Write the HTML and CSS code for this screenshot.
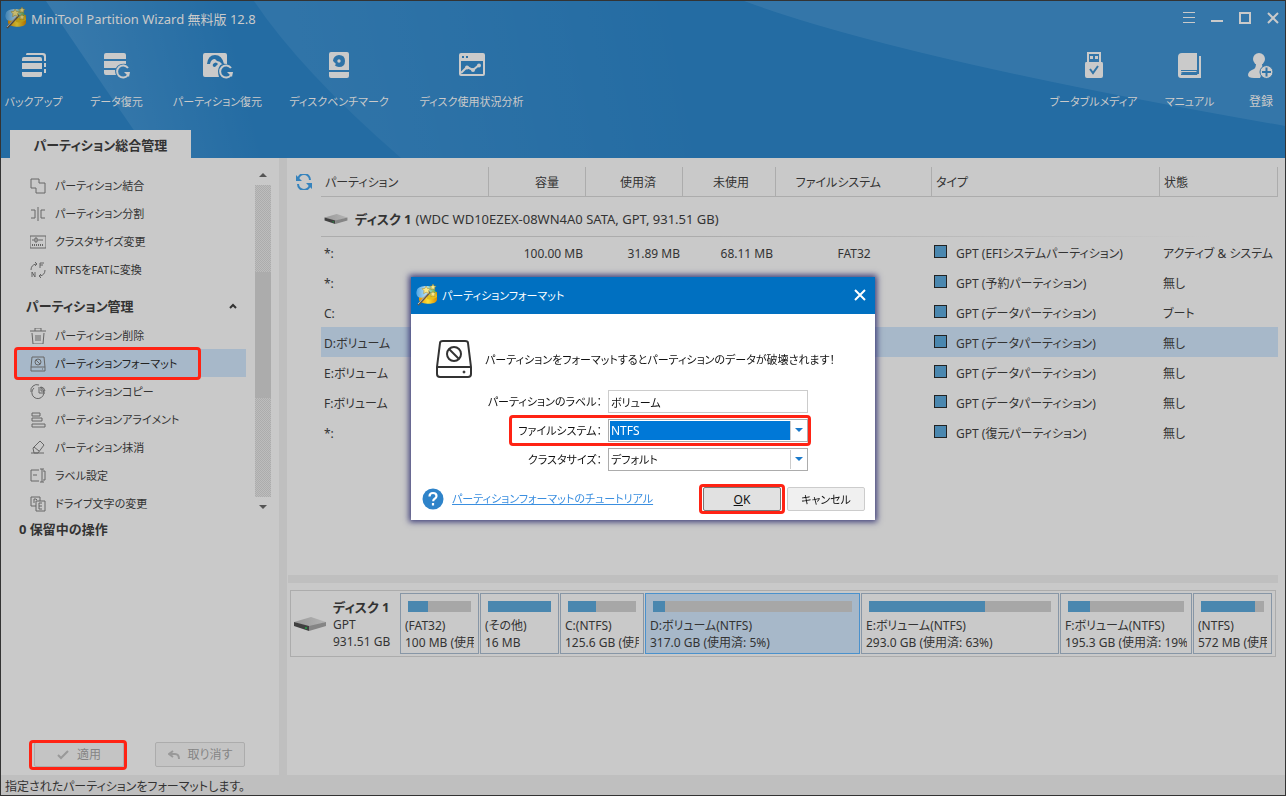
FILE: index.html
```html
<!DOCTYPE html>
<html lang="ja">
<head>
<meta charset="utf-8">
<title>MiniTool Partition Wizard 無料版 12.8</title>
<link rel="stylesheet" href="styles.css">
</head>
<body>
<svg class="defs" aria-hidden="true">
  <defs>
    <linearGradient id="gold" x1="0" x2="1"><stop offset="0" stop-color="#e88f00"/><stop offset=".5" stop-color="#ffe23a"/><stop offset="1" stop-color="#d88a00"/></linearGradient>
    <linearGradient id="sky" x1="0" x2="1"><stop offset="0" stop-color="#4fa6e4"/><stop offset=".5" stop-color="#b4def6"/><stop offset="1" stop-color="#62b544"/></linearGradient>
    <linearGradient id="diskTop" x1="0" x2="1"><stop offset="0" stop-color="#999"/><stop offset="1" stop-color="#b4b4b4"/></linearGradient>
    <symbol id="logo" viewBox="0 0 22 22">
      <path d="M3 11v5c1 4 16 6 18 0V8z" fill="url(#gold)"/>
      <path d="M1 6c1-4 11-5 15-3l4 5c-3 4-14 7-18 5-2-2-2-5-1-7z" fill="url(#sky)"/>
      <path d="M11 11c4 0 7-1 9-3l1 5c-3 2-7 3-10 2z" fill="#e6c21c"/>
      <path d="M2 21 14 8" stroke="#655b4b" stroke-width="2"/><path d="M2 20 13 8" stroke="#ddd" stroke-width=".8"/>
      <path d="m10 2 1.500 2.500 3 .2-2 2 .7 3-3-1.500-2.600 1.500.4-3-2-2 3-.4zM17 0l1 2 2 .3-1.500 1.500.4 2-2-1-2 1 .5-2L14 2.300l2-.3zM17 7l1 2 2 .3-1.500 1.500.4 2-2-1-2 1 .5-2L14 9.300l2-.3z" fill="#f8e98c" stroke="#a58726" stroke-width=".5"/>
    </symbol>
    <symbol id="disk" viewBox="0 0 32 14">
      <path d="M0 5 17 0l15 5-17 5z" fill="url(#diskTop)"/><path d="M0 5l15 4v5L0 9z" fill="#404040"/><path d="M15 9l17-4v4l-17 5z" fill="#858585"/><path d="M12 10v2" stroke="#20a545" stroke-width="1.500"/>
    </symbol>
  </defs>
</svg>
<div class="window">
  <header class="top">
    <svg class="beams" viewBox="0 0 1284 157" preserveAspectRatio="none" aria-hidden="true">
      <defs>
        <linearGradient id="b1" gradientUnits="userSpaceOnUse" x1="70" y1="60" x2="230" y2="20"><stop stop-color="#fff" stop-opacity=".09"/><stop offset="1" stop-color="#fff" stop-opacity="0"/></linearGradient>
        <linearGradient id="b2" gradientUnits="userSpaceOnUse" x1="300" y1="70" x2="680" y2="0"><stop stop-color="#fff" stop-opacity=".055"/><stop offset="1" stop-color="#fff" stop-opacity="0"/></linearGradient>
      </defs>
      <path d="M45 0Q92 70 152 157H450L240 0z" fill="url(#b1)"/>
      <path d="M253 0Q300 70 400 157H800V0z" fill="url(#b2)"/>
      <path d="M743 0Q900 58 1284 125V0z" fill="#fff" fill-opacity=".075"/>
    </svg>
    <div class="titlebar">
      <svg class="logo dim"><use href="#logo"/></svg>
      <h1>MiniTool Partition Wizard 無料版 12.8</h1>
      <div class="winbtns">
        <button aria-label="メニュー"><svg width="12" height="12" viewBox="0 0 12 12"><path d="M0 .5h12M0 5.500h12M0 10.500h12" stroke="currentColor"/></svg></button>
        <button aria-label="最小化"><svg width="12" height="12" viewBox="0 0 12 12"><path d="M0 9h12" stroke="currentColor" stroke-width="2"/></svg></button>
        <button aria-label="最大化"><svg width="12" height="12" viewBox="0 0 12 12"><path d="M1 1h10v10H1z" fill="none" stroke="currentColor" stroke-width="2"/></svg></button>
        <button aria-label="閉じる"><svg width="12" height="12" viewBox="0 0 12 12"><path d="m1 1 10 10M11 1 1 11" stroke="currentColor" stroke-width="2"/></svg></button>
      </div>
    </div>
    <nav class="toolbar">
      <button class="tool w-s"><svg viewBox="0 0 26 28"><path d="M6 1h16q3 0 3 3v5h-2V5q0-2-2-2H5q0-2 1-2zM23 11h2v4h-2zM23 17h2v4h-2zM3 5h16q2 0 2 2v2H1V7q0-2 2-2zM1 11h20v6H1zM1 20h20v3q0 2-2 2H3q-2 0-2-2z" fill="currentColor"/></svg>バックアップ</button>
      <button class="tool w-s"><svg viewBox="0 0 28 28"><path d="M3 1h18q2 0 2 2v4H1V3q0-2 2-2zM1 9h22v3q-7-1-10 4H1zM1 18h11q0 3 1 5H3q-2 0-2-2z" fill="currentColor"/><path d="M25 16a6 6 0 1 0 0 7" fill="none" stroke="currentColor" stroke-width="2"/><path d="M27 20h-6l5 5z" fill="currentColor"/></svg>データ復元</button>
      <button class="tool w-m"><svg viewBox="0 0 32 28"><path fill-rule="evenodd" d="M3 1h20q2 0 2 2v9q-8-2-9 7 0 3 1 6H3q-2 0-2-2V3q0-2 2-2zm2 11h3q1-5 5-5l2 2q3 0 5 3h2Q20 3 13 3T5 12zm6 0q3-3 5 0l-3 3q-3 0-2-3z" fill="currentColor"/><path d="M29 16a6 6 0 1 0 0 7" fill="none" stroke="currentColor" stroke-width="2"/><path d="M31 20h-6l5 5z" fill="currentColor"/></svg>パーティション復元</button>
      <button class="tool w-l"><svg viewBox="0 0 22 28"><path fill-rule="evenodd" d="M3 0h16q2 0 2 2v16H1V2q0-2 2-2zm8 3a6 6 0 1 0 0 12q6 0 6-6t-6-6zM1 20h20v4q0 2-2 2H3q-2 0-2-2z" fill="currentColor"/><circle cx="11" cy="9" r="1.700" fill="currentColor"/><path d="m8 12-3 3V9z" fill="currentColor"/></svg>ディスクベンチマーク</button>
      <button class="tool w-xl"><svg viewBox="0 0 28 28"><path fill-rule="evenodd" d="M3 1h22q2 0 2 2v19q0 2-2 2H3q-2 0-2-2V3q0-2 2-2zm1 3v2h2V4zm4 0v2h2V4zM3 9v13h22V9z" fill="currentColor"/><path d="m3 21 6-6 6 3 6-5" fill="none" stroke="currentColor" stroke-width="2"/><circle cx="9" cy="15.500" r="2" fill="currentColor"/><circle cx="15" cy="18" r="2" fill="currentColor"/><circle cx="21" cy="13.500" r="2" fill="currentColor"/></svg>ディスク使用状況分析</button>
      <span class="spacer"></span>
      <button class="tool w-b"><svg viewBox="0 0 20 28"><path fill-rule="evenodd" d="M3 0h14v10h1q1 0 1 2v12q0 2-2 2H3q-2 0-2-2V12q0-2 1-2h1zm2 2v8h10V2z" fill="currentColor"/><path d="M6 4h3v3H6zM11 4h3v3h-3z" fill="currentColor"/><path d="m6 17 3 4 5-7" fill="none" stroke="#3275a7" stroke-width="2"/></svg>ブータブルメディア</button>
      <button class="tool w-u"><svg viewBox="0 0 26 28"><path fill-rule="evenodd" d="M5 1h15v19H6q-2 0-2 1t2 1h16V4h2v22H4q-3 0-3-3V5q0-4 4-4z" fill="currentColor"/><path d="M4 18.500h16M4 22.500h16V18" fill="none" stroke="#3275a7"/></svg>マニュアル</button>
      <button class="tool w-r"><svg viewBox="0 0 26 28"><circle cx="11" cy="7" r="6" fill="currentColor"/><path d="M8 11h6q0 5 2 6l-4 9H6q-6 0-6-3 0-4 6-6 2-1 2-6z" fill="currentColor"/><circle cx="18.500" cy="20" r="6.500" fill="currentColor" stroke="#3275a7"/><path d="M14 20h9M18.500 15.500v9" stroke="#3275a7" stroke-width="2"/></svg>登録</button>
    </nav>
    <div class="tabs"><button class="tab">パーティション総合管理</button></div>
  </header>

  <div class="main">
    <aside class="side">
      <div class="scroller">
        <div class="list">
          <ul>
            <li><button><svg viewBox="0 0 16 16"><path d="M1 1h8v4h6v10H6v-5H1z"/></svg>パーティション結合</button></li>
            <li><button><svg viewBox="0 0 16 16"><path d="M1 4h4v8H1M15 4h-4v8h4M8 1v14"/></svg>パーティション分割</button></li>
            <li><button><svg viewBox="0 0 16 16"><path d="M0 2h16v12H0zM2 6h3M7 6h6M5 4h2v4H5z"/><path d="M2 11h12" stroke-dasharray="1 1" stroke-width="2"/></svg>クラスタサイズ変更</button></li>
            <li><button><svg viewBox="0 0 16 16"><path d="M1 8q0-5 5-6M5 0l2 2-2 2M15 8q0 5-5 6M11 16l-2-2 2-2M10 6V1h4M10 3h3M2 15v-5l3 5v-5"/></svg>NTFSをFATに変換</button></li>
          </ul>
          <h2>パーティション管理<svg width="8" height="6" viewBox="0 0 8 6"><path d="m1 5 3-3 3 3" fill="none" stroke="#333" stroke-width="2"/></svg></h2>
          <ul>
            <li><button><svg viewBox="0 0 16 16"><path d="M0 3h16M5 3V0h6v3M2 5l1 11h10l1-11M6 7v6M8 7v6M10 7v6"/></svg>パーティション削除</button></li>
            <li class="current marked"><button><svg viewBox="0 0 16 16"><path d="M2 1h12l1 10v4H1v-4zM1 11h14M12 13h1"/><circle cx="8" cy="6" r="3"/><path d="m6 4 4 4"/></svg>パーティションフォーマット</button></li>
            <li><button><svg viewBox="0 0 16 16"><path d="M4 4a6 6 0 1 0 6-1M1 8a6 6 0 0 1 8-7M9 9V3M9 9h6M11 7V3q3 0 4 4z"/></svg>パーティションコピー</button></li>
            <li><button><svg viewBox="0 0 16 16"><path d="M2 1h8v3H2zM2 6h10v3H2zM2 12h13v3H2z"/></svg>パーティションアライメント</button></li>
            <li><button><svg viewBox="0 0 16 16"><path d="M1 13h13M3 8l7-7 4 4-6 8H4zM4 7l5 4"/></svg>パーティション抹消</button></li>
            <li><button><svg viewBox="0 0 16 16"><path d="M9 2H1v11h8M3 7h4M12 1v13M10 1h4M10 14h4M13 3h2v9h-2"/></svg>ラベル設定</button></li>
            <li><button><svg viewBox="0 0 16 16"><path d="M6 10H1V1h9v4M4 7V3h2l1 1M6 5h9v10H6zM12 7H9v6h3M9 10h3"/></svg>ドライブ文字の変更</button></li>
          </ul>
        </div>
        <div class="scrollbar" aria-hidden="true"><i class="up"></i><div class="track"><div class="thumb"></div></div><i class="down"></i></div>
      </div>
      <h2 class="pending">0 保留中の操作</h2>
      <div class="actions">
        <span class="marked apply"><button disabled><svg width="12" height="10" viewBox="0 0 12 10"><path d="m1 5 3 3 7-7"/></svg>適用</button></span>
        <button disabled><svg width="12" height="10" viewBox="0 0 12 10"><path d="M5 1 1 4l4 3M1 4h6q4 0 4 5"/></svg>取り消す</button>
      </div>
    </aside>
    <section class="content">
      <div class="listing">
        <button class="refresh" aria-label="更新"><svg width="16" height="16" viewBox="0 0 16 16"><path d="M2 6a6 6 0 0 1 12 0M14 10a6 6 0 0 1-12 0" fill="none" stroke="#3583bd" stroke-width="2"/><path d="M0 1v6h6zM16 15V9h-6z" fill="#3583bd"/></svg></button>
        <table>
          <colgroup><col class="c1"><col class="c2"><col class="c2"><col class="c3"><col class="c4"><col><col class="c5"></colgroup>
          <thead><tr><th>パーティション</th><th class="num">容量</th><th class="num">使用済</th><th class="num">未使用</th><th class="fs">ファイルシステム</th><th>タイプ</th><th>状態</th></tr></thead>
          <tbody>
            <tr class="diskrow"><td colspan="7"><div><svg width="24" height="10"><use href="#disk"/></svg><b>ディスク 1</b><span>(WDC WD10EZEX-08WN4A0 SATA, GPT, 931.51 GB)</span></div></td></tr>
            <tr><td>*:</td><td class="num">100.00 MB</td><td class="num">31.89 MB</td><td class="num">68.11 MB</td><td class="fs">FAT32</td><td class="type">GPT (EFIシステムパーティション)</td><td>アクティブ &amp; システム</td></tr>
            <tr><td>*:</td><td></td><td></td><td></td><td></td><td class="type">GPT (予約パーティション)</td><td>無し</td></tr>
            <tr><td>C:</td><td></td><td></td><td></td><td></td><td class="type">GPT (データパーティション)</td><td>ブート</td></tr>
            <tr class="sel"><td>D:ボリューム</td><td></td><td></td><td></td><td></td><td class="type">GPT (データパーティション)</td><td>無し</td></tr>
            <tr><td>E:ボリューム</td><td></td><td></td><td></td><td></td><td class="type">GPT (データパーティション)</td><td>無し</td></tr>
            <tr><td>F:ボリューム</td><td></td><td></td><td></td><td></td><td class="type">GPT (データパーティション)</td><td>無し</td></tr>
            <tr><td>*:</td><td></td><td></td><td></td><td></td><td class="type">GPT (復元パーティション)</td><td>無し</td></tr>
          </tbody>
        </table>
      </div>
      <div class="hsplit"></div>
      <div class="map">
        <svg class="mapdisk" width="32" height="14"><use href="#disk"/></svg>
        <div class="mapinfo"><b>ディスク 1</b><span>GPT</span><span>931.51 GB</span></div>
        <div class="parts">
          <div class="part"><div class="bar"><i style="width:32%"></i></div><span>(FAT32)</span><span>100 MB (使用</span></div>
          <div class="part"><div class="bar"><i style="width:100%"></i></div><span>(その他)</span><span>16 MB</span></div>
          <div class="part"><div class="bar"><i style="width:41%"></i></div><span>C:(NTFS)</span><span>125.6 GB (使用</span></div>
          <div class="part on"><div class="bar"><i style="width:6%"></i></div><span>D:ボリューム(NTFS)</span><span>317.0 GB (使用済: 5%)</span></div>
          <div class="part"><div class="bar"><i style="width:64%"></i></div><span>E:ボリューム(NTFS)</span><span>293.0 GB (使用済: 63%)</span></div>
          <div class="part"><div class="bar"><i style="width:19%"></i></div><span>F:ボリューム(NTFS)</span><span>195.3 GB (使用済: 19%</span></div>
          <div class="part"><div class="bar"><i style="width:86%"></i></div><span>(NTFS)</span><span>572 MB (使用</span></div>
        </div>
      </div>
    </section>
  </div>
  <footer>指定されたパーティションをフォーマットします。</footer>
</div>

<div class="overlay">
  <form class="dialog" role="dialog" aria-labelledby="dlg-title">
    <div class="dlg-head"><svg class="logo"><use href="#logo"/></svg><h2 id="dlg-title">パーティションフォーマット</h2><button type="button" aria-label="閉じる"><svg width="12" height="12" viewBox="0 0 12 12"><path d="m1 1 10 10M11 1 1 11" stroke="currentColor" stroke-width="2"/></svg></button></div>
    <div class="dlg-body">
      <div class="warn"><svg width="36" height="38" viewBox="0 0 36 38" fill="none" stroke="#333" stroke-width="2"><path d="M4 3q0-2 3-2h22q3 0 3 2l3 24v7q0 3-3 3H4q-3 0-3-3v-7zM1 27h34"/><circle cx="18" cy="14" r="7"/><path d="m13 9 10 10"/><circle cx="28" cy="32" r="1" fill="#333" stroke-width="1"/></svg><p>パーティションをフォーマットするとパーティションのデータが破壊されます！</p></div>
      <div class="fields">
        <div class="field"><label for="lbl">パーティションのラベル：</label><input id="lbl" type="text" value="ボリューム"></div>
        <div class="field marked"><label for="fsys">ファイルシステム：</label><span class="combo focus"><select id="fsys"><option>NTFS</option></select><i></i></span></div>
        <div class="field"><label for="clus">クラスタサイズ：</label><span class="combo"><select id="clus"><option>デフォルト</option></select><i></i></span></div>
      </div>
      <div class="dlg-foot">
        <svg width="22" height="22" viewBox="0 0 22 22"><circle cx="11" cy="11" r="10.500" fill="#2e83c9"/><path d="M7.500 8.500q0-3.500 3.500-3.500t3.500 3q0 1.600-1.800 2.700-1.500 1-1.500 2.600M11 15v2.500" fill="none" stroke="#fff" stroke-width="2.200"/></svg>
        <a href="#tutorial">パーティションフォーマットのチュートリアル</a>
        <span class="marked okwrap"><button type="button" class="ok"><u>O</u>K</button></span>
        <button type="button">キャンセル</button>
      </div>
    </div>
  </form>
</div>
</body>
</html>
```
FILE: styles.css
```css
* { box-sizing: border-box; }
html, body { height: 100%; margin: 0; }
body, button, input, select {
  font-family: "Noto Sans", "Noto Sans CJK JP", sans-serif;
  font-size: 12px;
  line-height: 16px;
  font-feature-settings: "palt";
}
body { color: #333; background: #c9c9c9; overflow: hidden; }
button { margin: 0; padding: 0; border: 0; background: none; color: inherit; white-space: nowrap; }
h1, h2, p, ul { margin: 0; padding: 0; font-size: 12px; font-weight: 400; }
ul { list-style: none; }
svg { flex: none; display: block; }
.defs { position: absolute; width: 0; height: 0; }

.window { display: flex; flex-direction: column; height: 100vh; border: 1px solid #333; }

/* header */
.top { position: relative; flex: none; color: #cacaca; background: #246ca3; }
.beams { position: absolute; inset: 0; width: 100%; height: 100%; }
.titlebar, .toolbar, .tabs { position: relative; display: flex; }
.titlebar { align-items: center; height: 34px; padding: 0 6px 0 4px; }
.logo { width: 22px; height: 22px; }
.dim { filter: brightness(.8); }
.titlebar h1 { flex: 1; margin-left: 4px; padding-top: 1px; font-size: 13px; }
.winbtns { display: flex; gap: 16px; }
.toolbar { gap: 26px; height: 95px; padding: 17px 11px 0 4px; }
.tool { display: flex; flex-direction: column; align-items: center; gap: 14px; height: 60px; font-size: 11px; }
.tool svg { height: 28px; }
.w-s { width: 57px; }
.w-m { width: 93px; }
.w-l { width: 98px; }
.w-xl { width: 115px; }
.w-b { width: 89px; }
.w-u { width: 51px; }
.w-r { width: 26px; margin-left: 7px; font-size: 12px; }
.spacer { flex: 1; }
.tabs { height: 28px; padding-left: 9px; }
.tab { width: 181px; padding-top: 2px; background: #c9c9c9; color: #333; font-size: 13px; font-weight: 700; }

/* sidebar */
.main { flex: 1; display: flex; min-height: 0; }
.side { width: 286px; flex: none; display: flex; flex-direction: column; border-right: 8px solid #bfbfbf; padding-bottom: 8px; }
.scroller { display: flex; padding-top: 11px; }
.list { flex: 1; padding-top: 2px; }
.list li { height: 28px; margin: 0 9px 0 16px; }
.list li button { display: flex; align-items: center; gap: 9px; width: 100%; height: 28px; padding: 1px 0 0 13px; font-size: 11px; }
.list li svg { width: 16px; height: 16px; fill: none; stroke: #666; stroke-width: 1; }
.list h2 { display: flex; align-items: center; justify-content: space-between; height: 38px; padding: 7px 18px 0 25px; font-size: 13px; font-weight: 700; }
.list .current { background: #a7b8c9; }
.current button { color: #222; }
.scrollbar { width: 16px; margin: 0 8px 4px 0; display: flex; flex-direction: column; align-items: center; }
.scrollbar i { border: 4px solid transparent; }
.scrollbar .up { border-top: 0; border-bottom-color: #555; margin: 4px 0 8px; }
.scrollbar .down { border-bottom: 0; border-top-color: #555; margin: 8px 0 4px; }
.track { flex: 1; width: 16px; padding-top: 87px; background: repeating-conic-gradient(#bdbdbd 0 25%, #acacac 0 50%) 0 0 / 2px 2px; }
.thumb { height: 126px; background: #acacac; }
.pending { padding: 4px 0 0 18px; font-size: 13px; font-weight: 700; }
.actions { display: flex; gap: 31px; margin-top: auto; padding-left: 33px; }
.actions button { display: flex; align-items: center; justify-content: center; gap: 8px; width: 90px; height: 25px; border: 1px solid #acacac; border-radius: 2px; color: #848484; background: #c4c4c4; }
.actions svg { fill: none; stroke: #999; stroke-width: 2; }

/* red call-outs around the controls to use */
.marked { position: relative; }
.marked::after { content: ""; position: absolute; inset: -2px 45px -3px -3px; border: 3px solid #ff2314; border-radius: 4px; pointer-events: none; }
.marked.apply::after { inset: -2px -3px -3px -5px; }

/* partition list */
.content { flex: 1; min-width: 0; display: flex; flex-direction: column; padding: 9px 7px 0 1px; }
.listing { flex: 1; display: flex; align-items: flex-start; min-height: 0; }
.refresh { width: 33px; padding: 7px 0 0 8px; }
table { flex: 1; width: 100%; table-layout: fixed; border-collapse: separate; border-spacing: 0; }
.c1 { width: 168px; } .c2 { width: 97px; } .c3 { width: 93px; } .c4 { width: 156px; } .c5 { width: 118px; }
th { height: 30px; padding: 2px 4px 0; font-weight: 400; text-align: left; border-right: 1px solid #acacac; border-bottom: 1px solid #acacac; }
th.num { padding-right: 26px; text-align: right; }
th.fs { padding-right: 50px; text-align: right; }
td { height: 30px; padding: 3px 3px 0; white-space: nowrap; }
td.num { text-align: right; }
td.fs { text-align: center; }
td.type { padding-left: 2px; }
.type::before { content: ""; display: inline-block; width: 11px; height: 11px; margin-right: 9px; border: 1px solid #222; background: #4a87af; }
.diskrow td { height: 40px; background: linear-gradient(90deg, #acacac 40%, #c9c9c9 93%) 0 100% / 100% 1px no-repeat; }
.diskrow div { display: flex; align-items: center; gap: 4px; }
.diskrow b { margin-left: 3px; font-size: 13px; }
.diskrow span { font-size: 13px; }
.sel td { background: #a7b8c9; }

/* disk map */
.hsplit { height: 8px; background: #bfbfbf; }
.map { display: flex; align-items: center; margin: 7px 2px 118px; height: 67px; padding: 3px; border: 1px solid #acacac; }
.mapinfo { display: flex; flex-direction: column; width: 67px; margin-left: 7px; padding-top: 1px; line-height: 17px; white-space: nowrap; }
.mapinfo b { font-size: 13px; }
.parts { flex: 1; min-width: 0; display: grid; grid-template-columns: 79fr 79fr 84fr 215fr 198fr 132fr 79fr; gap: 1px; height: 61px; }
.part { min-width: 0; padding: 7px 4px 0; border: 1px solid #8796a6; }
.part span { display: block; overflow: hidden; line-height: 17px; white-space: nowrap; }
.part.on { background: #a7b8c9; border-color: #4a91cc; }
.bar { height: 11px; margin: 0 3px 5px; background: #a7a7a7; }
.bar i { display: block; height: 11px; background: #4a87af; }

footer { flex: none; height: 20px; padding: 4px 4px 0; line-height: 16px; background: #bfbfbf; }

/* dialog */
.overlay { position: fixed; inset: 0; display: grid; place-items: center; }
.dialog { width: 464px; color: #111; background: #fff; box-shadow: 0 0 6px 2px #3d3d78; }
.dialog h2, .dialog label, .dialog input, .dialog a { font-size: 11px; }
.dlg-head { display: flex; align-items: center; gap: 4px; height: 37px; padding: 0 9px 0 5px; color: #fff; background: #0070c1; }
.dlg-head h2 { flex: 1; padding-top: 2px; }
.dlg-body { padding: 26px 10px 9px; }
.warn { display: flex; align-items: center; gap: 13px; padding-left: 15px; white-space: nowrap; }
.warn p { padding-top: 3px; font-size: 11px; }
.fields { display: grid; gap: 6px; margin-top: 12px; }
.field { display: grid; grid-template-columns: 181px 200px; align-items: center; gap: 6px; }
.field label { padding-top: 2px; text-align: right; }
.field input { height: 23px; padding: 1px 2px 0; border: 1px solid #ccc; color: #111; background: #fff; }
.field.marked::after { inset: -4px 54px -4px 88px; }
.combo { display: flex; height: 23px; padding: 1px; border: 1px solid #acacac; }
.combo select { flex: 1; appearance: none; padding: 1px 1px 0; border: 0; border-radius: 0; font-size: 11px; color: #111; background: #fff; }
.combo.focus select { font-size: 12px; color: #fff; background: #0078d7; }
.combo i { display: grid; place-items: center; width: 16px; border-left: 1px solid #ccc; }
.combo i::after { content: ""; border: 4px solid transparent; border-top-color: #1979ca; border-bottom: 0; }
.dlg-foot { display: flex; align-items: center; margin-top: 16px; padding-left: 1px; }
.dlg-foot a { margin: 0 auto 0 8px; color: #3b8fe0; }
.dlg-foot button { width: 78px; height: 24px; padding-top: 2px; border: 1px solid #ccc; border-radius: 2px; font-size: 11px; background: #f0f0f0; }
.dlg-foot .ok { border-color: #777; font-size: 12px; background: #e1e1e1; }
.okwrap { margin-right: 6px; }
.dlg-foot .okwrap::after { inset: -3px -4px; }
```
